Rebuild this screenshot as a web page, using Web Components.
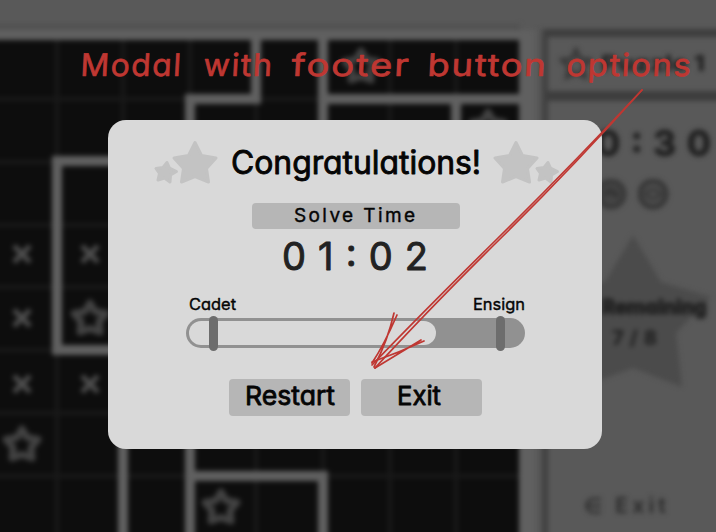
<!DOCTYPE html>
<html lang="en">
<head>
<meta charset="utf-8">
<title>Congratulations</title>
<style>
html,body{margin:0;height:100%;overflow:hidden;background:#595959;font-family:Inter,"Liberation Sans",sans-serif}
</style>
</head>
<body>
<puzzle-page></puzzle-page>
<script>
const define = (name, html) => customElements.define(name, class extends HTMLElement {
  connectedCallback() {
    if (this.shadowRoot) return;
    const root = this.attachShadow({ mode: 'open' });
    root.innerHTML = typeof html === 'function' ? html(this) : html;
  }
});

/* Rounded lettering fitted to a given width. */
define('round-text', el => {
  const a = n => el.getAttribute(n);
  const w = +a('w'), h = +a('h'), s = a('size'), st = a('stroke') || 0, y = a('base');
  return `<style>:host{display:block;flex:none;width:${w}px;height:${h}px}
  svg{display:block;overflow:visible}
  text{font-family:Inter,"Liberation Sans",sans-serif;font-feature-settings:"cv11","ss03";fill:currentColor;stroke:currentColor;stroke-linejoin:round;stroke-linecap:round}</style>
  <svg width="${w}" height="${h}"><text x="0" y="${y}" font-size="${s}" font-weight="${a('weight') || 400}" stroke-width="${st}" textLength="${w}" lengthAdjust="${a('adjust') || 'spacingAndGlyphs'}">${a('text')}</text></svg>`;
});

const outlineStar = (x, y) => `<path transform="translate(${x} ${y})" d="M0-15L5-6.500L16-4.500L9 3.500L10 14L0 10.500L-10 14L-9 3.500L-16-4.500L-5-6.500Z"/>`;
const cross = (x, y) => `<path d="M${x-8} ${y-8}l16 16m0-16l-16 16"/>`;
define('puzzle-board', `<style>:host{display:block;flex:none;width:536px;height:532px}svg{display:block;overflow:visible}</style>
<svg width="536" height="532">
 <path fill="#515151" d="M-20 24H520V32H-20z"/>
 <path fill="#606060" d="M-20 30H535V560H-20z"/>
 <path fill="#0d0d0d" d="M-20 40H519V560H-20z"/>
 <path stroke="#191919" stroke-width="4" fill="none" d="M57 40V560M123 40V560M190 40V560M256 40V560M323 40V560M390 40V560M456 40V560M-20 99H519M-20 162H519M-20 225H519M-20 287H519M-20 350H519M-20 413H519M-20 476H519"/>
 <path stroke="#606060" stroke-width="10" fill="none" d="M256 36V99H190V140M323 36V140M323 99H523M456 99V140M140 161H57V350H140M123 420V560M190 420V560M190 476H323V560"/>
 <g stroke="#424242" stroke-width="7" stroke-linejoin="round" fill="none">${outlineStar(361,66)+outlineStar(488,127)+outlineStar(90,318)+outlineStar(22,444)+outlineStar(221,507)}</g>
 <g stroke="#4e4e4e" stroke-width="5" fill="none">${cross(22,254)+cross(90,254)+cross(22,318)+cross(22,384)+cross(90,384)}</g>
</svg>`);

define('side-panel', `<style>
:host{display:block;flex:none;width:200px;height:580px;margin:29px 0 0 6px;box-sizing:border-box;border-left:6px solid #404040;color:#202020}
.top{box-sizing:border-box;height:72px;border-top:8px solid #3d3d3d;border-bottom:10px solid #3d3d3d;display:flex;align-items:center;padding-left:11px;gap:8px}
.time{padding:27px 0 0 48px}
.icons{display:flex;gap:11px;padding:21px 0 0 48px}
.count{display:grid;margin-top:25px;padding-left:3px}.count>*{grid-area:1/1}
.labels{padding:62px 0 0 51px}.labels round-text+round-text{margin:11px 0 0 10px}
.exit{padding:91px 0 0 36px}
svg{display:block}
</style>
<div class="top"><svg width="34" height="34" viewBox="-17 -17 34 34"><path fill="none" stroke="#3a3a3a" stroke-width="4.500" d="M0-14L4-5L14-4L7 3L9 13L0 9L-9 13L-7 3L-14-4L-4-5Z"/></svg><round-text text="Puzzle 1" w="104" h="24" base="19" size="22" weight="800"></round-text></div>
<div class="time"><round-text text="0:30" w="115" h="30" base="28" size="36" weight="700" stroke="1" adjust="spacing"></round-text></div>
<div class="icons"><svg width="31" height="31"><circle cx="15" cy="15" r="13" fill="#454545" stroke="#383838" stroke-width="5"/><path d="M8 18q5-14 14-2M9 12l13 6" stroke="#333" stroke-width="3" fill="none"/></svg><svg width="31" height="31"><circle cx="15" cy="15" r="13" fill="#505050" stroke="#363636" stroke-width="5"/><path d="M7 15q8-9 16 0q-8 9-16 0" stroke="#363636" stroke-width="3" fill="none"/></svg></div>
<div class="count"><svg width="170" height="170"><path fill="#4b4b4b" d="M82 0L110 47L160 62L125 98L131 152L82 133L30 152L35 98L0 60L54 47Z"/></svg>
<div class="labels"><round-text text="Remaining" w="105" h="20" base="17" size="20" weight="800" stroke="1"></round-text><round-text text="7/8" w="45" h="18" base="17" size="20" weight="800" adjust="spacing"></round-text></div></div>
<div class="exit"><round-text text="∈ Exit" w="82" h="20" base="17" size="21" weight="700" adjust="spacing" style="color:#2c2c2c"></round-text></div>`);

define('star-pair', el => `<style>:host{display:block;flex:none;width:65px;height:46px}svg{display:block;overflow:visible}</style>
<svg width="65" height="46"><g fill="#c3c3c3" stroke="#c3c3c3" stroke-width="3" stroke-linejoin="round">
${el.hasAttribute('trailing')
 ? '<path d="M23 2.500L29.500 15.500L44 18L34.500 28.500L36.500 42L23 36.500L9.500 42L11.500 28.500L2 18L16.500 15.500Z"/><path d="M55 22.500L57.500 28L64.500 31.500L58.500 35L58 42L52.500 38L46 40L47.500 33.500L44 28.500L51 27.500Z"/>'
 : '<path d="M42 2.500L48.500 15.500L63 18L53.500 28.500L55.500 42L42 36.500L28.500 42L30.500 28.500L21 18L35.500 15.500Z"/><path d="M14 22.500L16.500 28L23.500 31.500L17.500 35L17 42L11.500 38L5 40L6.500 33.500L3 28.500L10 27.500Z"/>'}
</g></svg>`);

define('rank-track', `<style>
:host{display:block;width:339px;margin-left:78px}
.names{display:flex;justify-content:space-between;padding:0 0 0 3px}
.row{display:grid;height:36px;align-items:center;margin-top:-1px}.row>*{grid-area:1/1}
.rail{box-sizing:border-box;height:30px;border-radius:15px;background:#919191;padding:3px}
.fill{height:24px;width:247px;border-radius:12px;background:#d9d9d9}
.marks{display:flex;justify-content:space-between;padding:0 20px 0 23px}
i{width:9px;height:35px;border-radius:4.500px;background:#6d6d6d}
</style><div class="names"><round-text text="Cadet" w="47" h="20" base="14" size="16" weight="400" stroke=".4"></round-text><round-text text="Ensign" w="52" h="20" base="14" size="16" weight="400" stroke=".4"></round-text></div>
<div class="row"><div class="rail"><div class="fill"></div></div><div class="marks"><i></i><i></i></div></div>`);

define('modal-button', `<style>:host{box-sizing:border-box;display:flex;justify-content:center;padding:5px 0 0;width:121px;height:37px;border-radius:4px;background:#b6b6b6}</style><slot></slot>`);

define('result-dialog', `<style>
:host{display:block;box-sizing:border-box;width:494px;height:329px;border-radius:18px;background:#d9d9d9;color:#050505;padding-top:20px}
header{display:flex;padding-left:45px}
header round-text{margin:0 12px 0 13px}
.label{box-sizing:border-box;display:flex;justify-content:center;width:208px;height:26px;margin:17px 0 0 144px;border-radius:4px;background:#b6b6b6;padding:2px 2px 0 0}
.time{padding:13px 0 0 174px;color:#222}
rank-track{margin-top:22px}
footer{display:flex;gap:10.500px;margin-top:28px;padding-left:121.500px}
.exit{margin-right:5px}
</style>
<header><star-pair></star-pair><round-text text="Congratulations!" w="250" h="46" base="34" size="32" weight="400" stroke=".9"></round-text><star-pair trailing></star-pair></header>
<div class="label"><round-text text="Solve Time" w="121" h="20" base="16.500" size="19" weight="400" stroke=".4" adjust="spacing"></round-text></div>
<div class="time"><round-text text="01:02" w="146" h="32" base="28" size="38" weight="400" stroke=".9" adjust="spacing"></round-text></div>
<rank-track></rank-track>
<footer><modal-button><round-text text="Restart" w="90" h="28" base="21" size="26" weight="400" stroke=".8"></round-text></modal-button><modal-button><round-text class="exit" text="Exit" w="44" h="28" base="21" size="26" weight="400" stroke=".8"></round-text></modal-button></footer>`);

/* Red handwritten callout with a sketched arrow to the footer buttons. */
define('sketch-note', () => {
  const words = [['Modal',80,102],['with',203,70],['footer',291,119],['button',427,120],['options',566,126]];
  return `<style>:host{display:block;color:#bf3732}svg{display:block}
  text{font-family:Inter,"Liberation Sans",sans-serif;font-feature-settings:"cv11";font-weight:400;font-size:31px;letter-spacing:1.500px;fill:currentColor;stroke:currentColor;stroke-width:.7;stroke-linejoin:round}</style>
  <svg width="716" height="532">${words.map(([t,x,w]) => `<text transform="translate(${x} 75.500) skewX(-3)" textLength="${w}" lengthAdjust="spacingAndGlyphs">${t}</text>`).join('')}
  <g fill="none" stroke="currentColor" stroke-width="1.700" stroke-linecap="round"><path d="M642 90Q573 164 498 238T372 365"/><path d="M642 90Q574 166 502 237T375 368"/><path d="M397 315Q384 345 372 363M394 313Q388 340 374 367"/><path d="M424 341Q398 353 372 362M421 340L375 368"/></g></svg>`;
});

define('puzzle-page', `<style>
:host{display:grid;width:716px;height:532px;overflow:hidden}
.scene,result-dialog,sketch-note{grid-area:1/1}
.scene{display:flex;overflow:hidden;width:716px;height:532px;align-items:flex-start}
.scene>*{filter:blur(2.700px)}
result-dialog{margin:120px 0 0 107.500px;z-index:1}
sketch-note{z-index:2}
</style><div class="scene"><puzzle-board></puzzle-board><side-panel></side-panel></div><result-dialog></result-dialog><sketch-note></sketch-note>`);
</script>
</body>
</html>
